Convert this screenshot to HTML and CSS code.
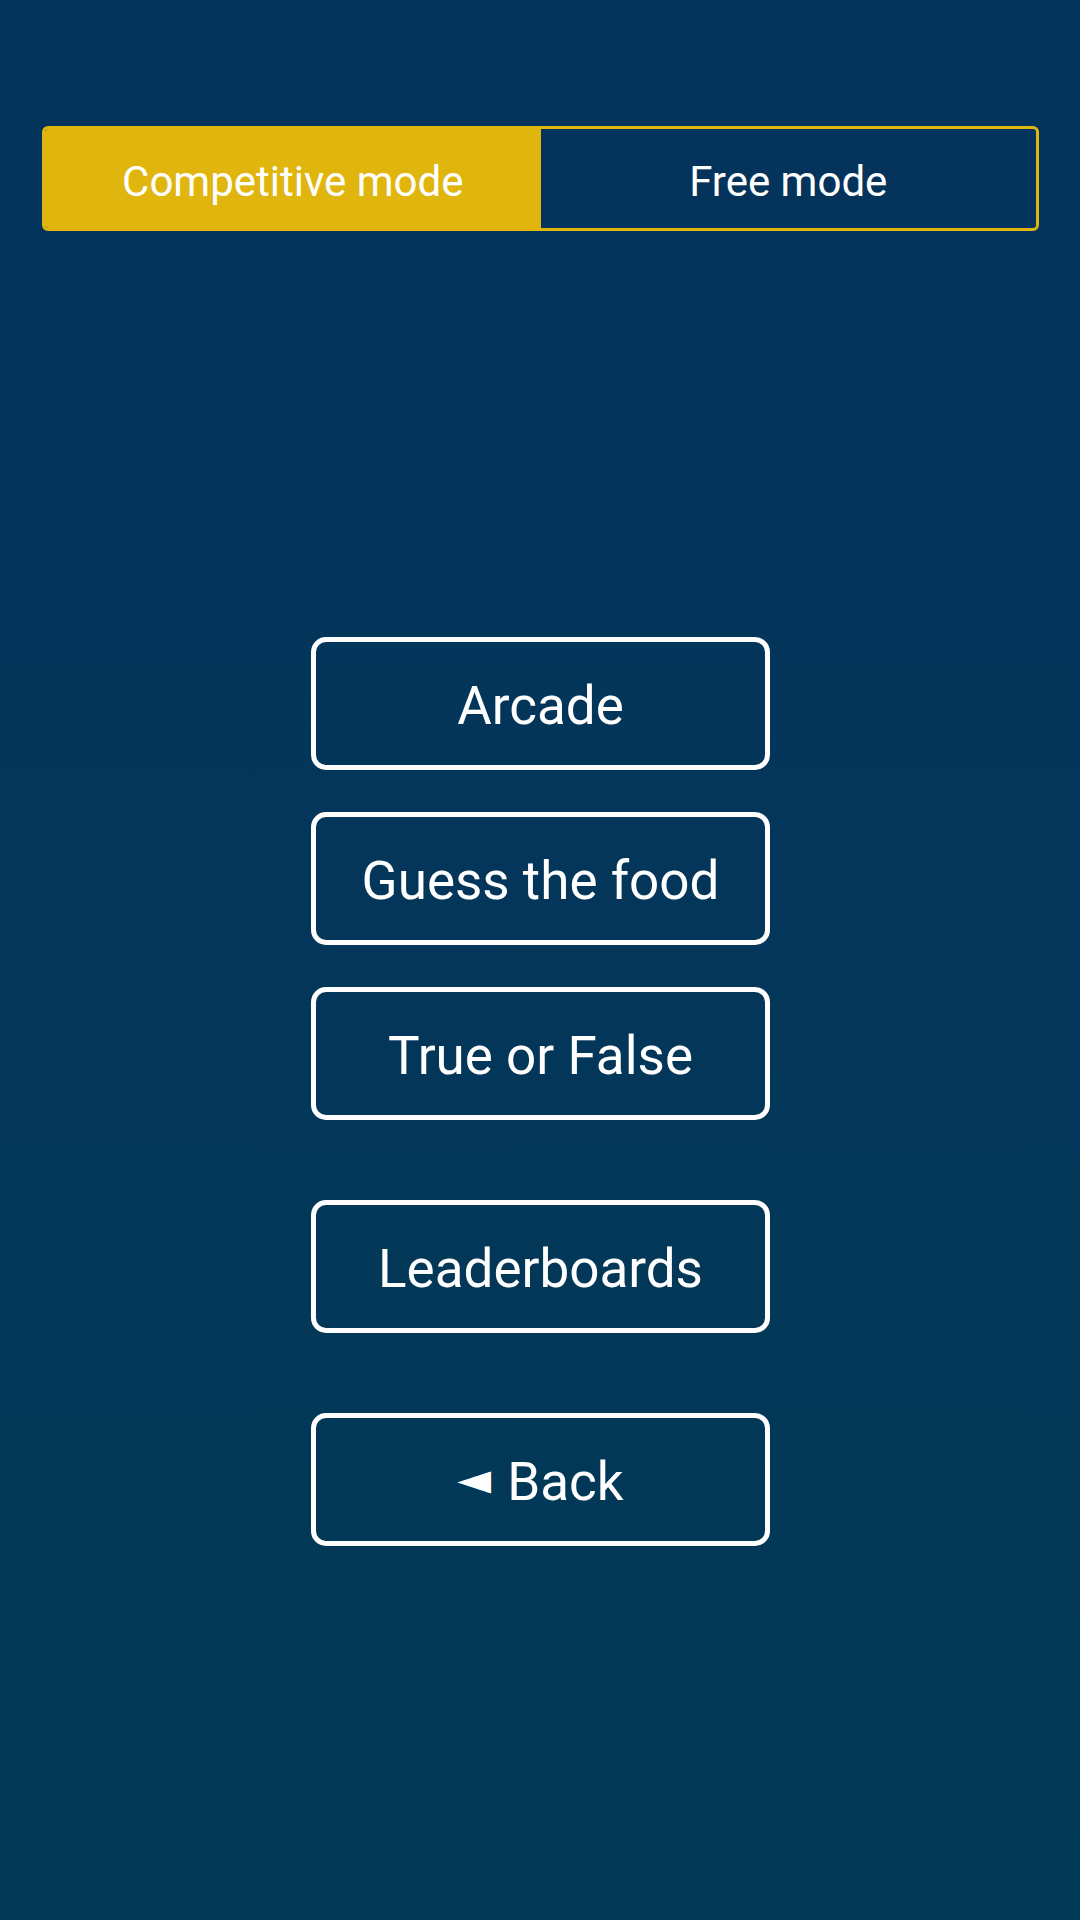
FILE: index.html
```html
<!DOCTYPE html>
<html lang="en">
<head>
<meta charset="utf-8">
<title>Mode select</title>
<link rel="stylesheet" href="styles.css">
</head>
<body>
<div class="screen">
  <div class="segmented">
    <div class="segment active">Competitive mode</div>
    <div class="segment">Free mode</div>
  </div>
  <div class="menu">
    <div class="group">
      <button class="btn">Arcade</button>
      <button class="btn">Guess the food</button>
      <button class="btn">True or False</button>
    </div>
    <button class="btn">Leaderboards</button>
    <button class="btn"><span class="arrow">◄</span> Back</button>
  </div>
</div>
</body>
</html>
```
FILE: styles.css
```css
html, body {
  margin: 0;
  padding: 0;
}
body {
  width: 1080px;
  height: 1920px;
  background: linear-gradient(to bottom, #04335c 0%, #033759 60%, #013a54 100%);
  font-family: Roboto, "Liberation Sans", sans-serif;
  color: #ffffff;
  overflow: hidden;
}
.screen {
  padding: 126px 41px 0 42px;
  display: flex;
  flex-direction: column;
}
.segmented {
  display: flex;
  height: 105px;
  box-sizing: border-box;
  border: 3px solid #e0b60e;
  border-radius: 6px;
  overflow: hidden;
}
.segment {
  flex: 1;
  display: flex;
  align-items: center;
  justify-content: center;
  font-size: 42px;
  padding-top: 5px;
  color: #ffffff;
}
.segment.active {
  background: #e0b60e;
}
.menu {
  margin-top: 406px;
  display: flex;
  flex-direction: column;
  align-items: center;
  gap: 80px;
}
.group {
  display: flex;
  flex-direction: column;
  gap: 42px;
}
.btn {
  width: 459px;
  height: 133px;
  box-sizing: border-box;
  border: 5px solid #ffffff;
  border-radius: 15px;
  background: transparent;
  color: #ffffff;
  font-family: Roboto, "Liberation Sans", sans-serif;
  font-size: 53px;
  padding: 4px 0 0 0;
  display: flex;
  align-items: center;
  justify-content: center;
}
.arrow {
  font-family: "DejaVu Sans", sans-serif;
  font-size: 44px;
  margin-right: 16px;
  position: relative;
  top: -3px;
}
```
